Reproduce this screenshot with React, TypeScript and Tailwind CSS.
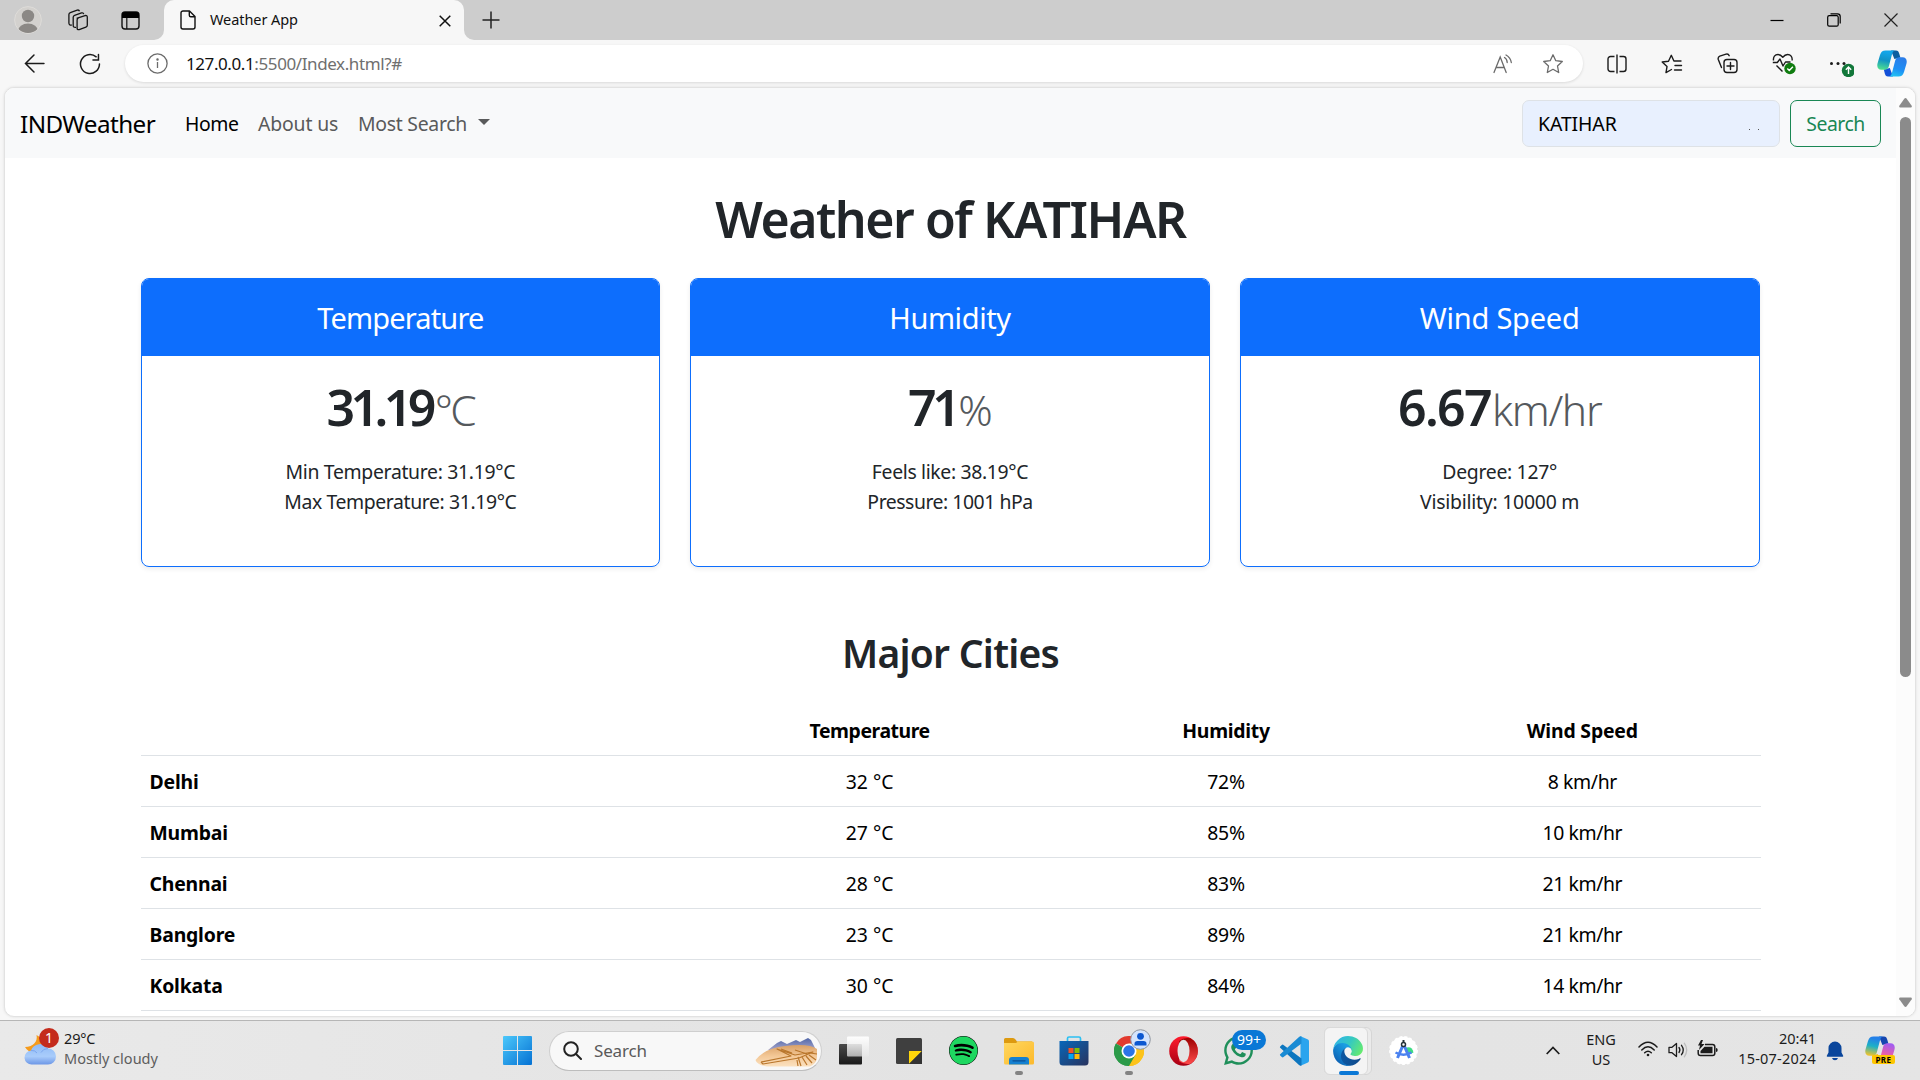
import type { ReactNode } from "react";
import { FaSpotify, FaWhatsapp } from "react-icons/fa";

type Metric = {
  title: string;
  titleTracking: string;
  value: string;
  valueTracking: string;
  unit: string;
  unitTracking: string;
  lines: { text: string; tracking: string }[];
};

const metrics: Metric[] = [
  {
    title: "Temperature",
    titleTracking: "tracking-[-0.029em]",
    value: "31.19",
    valueTracking: "tracking-[-0.092em]",
    unit: "°C",
    unitTracking: "tracking-[-0.06em] ml-[3px]",
    lines: [
      { text: "Min Temperature: 31.19°C", tracking: "tracking-[-0.0167em]" },
      { text: "Max Temperature: 31.19°C", tracking: "tracking-[-0.02em]" },
    ],
  },
  {
    title: "Humidity",
    titleTracking: "tracking-[-0.014em]",
    value: "71",
    valueTracking: "tracking-[-0.09em]",
    unit: "%",
    unitTracking: "tracking-[-0.02em] ml-0.5",
    lines: [
      { text: "Feels like: 38.19°C", tracking: "tracking-[-0.018em]" },
      { text: "Pressure: 1001 hPa", tracking: "tracking-[-0.024em]" },
    ],
  },
  {
    title: "Wind Speed",
    titleTracking: "tracking-[-0.008em]",
    value: "6.67",
    valueTracking: "tracking-[-0.033em]",
    unit: "km/hr",
    unitTracking: "tracking-[-0.03em] ml-px",
    lines: [
      { text: "Degree: 127°", tracking: "tracking-[-0.016em]" },
      { text: "Visibility: 10000 m", tracking: "tracking-[-0.012em]" },
    ],
  },
];

const cities = [
  { name: "Delhi", temp: "32 °C", humidity: "72%", wind: "8 km/hr" },
  { name: "Mumbai", temp: "27 °C", humidity: "85%", wind: "10 km/hr" },
  { name: "Chennai", temp: "28 °C", humidity: "83%", wind: "21 km/hr" },
  { name: "Banglore", temp: "23 °C", humidity: "89%", wind: "21 km/hr" },
  { name: "Kolkata", temp: "30 °C", humidity: "84%", wind: "14 km/hr" },
];

function TabStrip() {
  return (
    <div className="flex h-10 items-center bg-[#cdcdcd]">
      <div className="flex w-14 justify-center">
        <svg width="28" height="28" viewBox="0 0 28 28">
          <clipPath id="avatar">
            <circle cx="14" cy="14" r="13" />
          </clipPath>
          <circle cx="14" cy="14" r="13.4" fill="#d3d1ce" stroke="#dedcd9" />
          <g clipPath="url(#avatar)" fill="#8b8885">
            <circle cx="14" cy="10" r="6.2" />
            <ellipse cx="14" cy="25" rx="10" ry="7.5" />
          </g>
        </svg>
      </div>
      <div className="flex w-[43px] justify-center">
        <svg width="22" height="22" viewBox="0 0 22 22" fill="none" stroke="#151515" strokeWidth="1.3">
          <path d="M9.6 9.3 18 6.6q2.3-.5 2.3 1.6v8.1q0 1.3-1.4 1.8l-6.7 2.5q-2 .5-2.1-1.5v-8q0-1.4 1.2-1.9" />
          <path d="M9 18.3c-2 .4-2.8-.4-2.8-1.9V8.3q0-1.500 1.400-2l6.900-2.400q1.900-.5 2.200 1.300" />
          <path d="M4.800 16c-1.900.3-2.900-.5-2.900-2V5.600q0-1.500 1.400-2l6.900-2.500q1.800-.500 2.300 1.200" />
        </svg>
      </div>
      <div className="flex w-[65px] justify-center pr-[3px]">
        <svg width="19" height="19" viewBox="0 0 19 19">
          <rect x="1" y="1" width="17" height="17" rx="3" fill="none" stroke="#111" strokeWidth="1.400" />
          <path d="M1 7V3.500A2.500 2.500 0 0 1 3.500 1h12A2.500 2.500 0 0 1 18 3.500V7Z" fill="#000" />
          <path d="M5.800 7v11" stroke="#111" strokeWidth="1.200" />
        </svg>
      </div>
      <div className="relative flex h-10 w-[300px] items-center rounded-t-[10px] bg-[#f7f7f7] pr-[7px] pl-[15px]">
        <svg className="absolute bottom-0 -left-2.5" width="10" height="10">
          <path d="M10 0v10H0A10 10 0 0 0 10 0Z" fill="#f7f7f7" />
        </svg>
        <svg className="absolute -right-2.5 bottom-0" width="10" height="10">
          <path d="M0 0v10h10A10 10 0 0 1 0 0Z" fill="#f7f7f7" />
        </svg>
        <svg width="18" height="20" viewBox="0 0 18 20" fill="none" stroke="#111" strokeWidth="1.400" strokeLinejoin="round">
          <path d="M4 1h6.500L16 6.500V17a2 2 0 0 1-2 2H4a2 2 0 0 1-2-2V3a2 2 0 0 1 2-2Z" />
          <path d="M10.300 1v4.200a1.500 1.500 0 0 0 1.500 1.500H16" />
        </svg>
        <span className="ml-[13px] flex-1 text-[14.5px] tracking-[-0.005em] text-[#111]">Weather App</span>
        <svg className="mt-px mr-1.5" width="12" height="12" viewBox="0 0 12 12" stroke="#111" strokeWidth="1.500">
          <path d="m.7.7 10.600 10.600M11.300.7.7 11.300" />
        </svg>
      </div>
      <svg className="ml-[18px]" width="18" height="18" viewBox="0 0 18 18" stroke="#222" strokeWidth="1.500">
        <path d="M9 .5v17M.5 9h17" />
      </svg>
      <div className="ml-auto flex items-center">
        <div className="flex w-[57px] justify-center">
          <svg width="14" height="14" stroke="#000" strokeWidth="1.200">
            <path d="M.5 7.500h13" />
          </svg>
        </div>
        <div className="flex w-[57px] justify-center">
          <svg width="14" height="14" fill="none" stroke="#000" strokeWidth="1.200">
            <rect x=".7" y="2.700" width="10.500" height="10.500" rx="1.500" />
            <path d="M3.500.8h7a2.700 2.700 0 0 1 2.700 2.700v7" />
          </svg>
        </div>
        <div className="mr-px flex w-[57px] justify-center">
          <svg width="14" height="14" stroke="#222" strokeWidth="1.200">
            <path d="m.5.5 13 13M13.500.5l-13 13" />
          </svg>
        </div>
      </div>
    </div>
  );
}

function ToolSlot({ children }: { children: ReactNode }) {
  return <div className="flex w-[55px] justify-center">{children}</div>;
}

function CopilotMark({ id, colors }: { id: string; colors: string[] }) {
  return (
    <svg width="30" height="27" viewBox="0 0 30 27">
      <defs>
        <linearGradient id={id + "a"} x1="0.500" y1="0" x2="0.300" y2="1">
          <stop offset="0.100" stopColor={colors[0]} />
          <stop offset="0.500" stopColor={colors[1]} />
          <stop offset="1" stopColor={colors[2]} />
        </linearGradient>
        <linearGradient id={id + "b"} x1="0.600" y1="0" x2="0.300" y2="1">
          <stop offset="0" stopColor={colors[3]} />
          <stop offset="0.600" stopColor={colors[4]} />
          <stop offset="1" stopColor={colors[5]} />
        </linearGradient>
      </defs>
      <path d="M14 .5h5c2 0 2.600 1 3.200 3l1.200 4-6 1.500z" fill={colors[6]} />
      <path d="M16 26.500h-5c-2 0-2.600-1-3.200-3l-1-4 6-1.500z" fill={colors[7]} />
      <path d="M8.500.5H18c-2 .6-2.500 2-3.200 4.500l-3 11.500c-.8 2.500-2 3.200-4.300 3.200H4.500C1 19.700-.3 17 .5 13.500L3 5C4 1.800 5.500.5 8.500.5Z" fill={"url(#" + id + "a)"} />
      <path d="M21.500 26.500H12c2-.6 2.500-2 3.200-4.500l3-11.500c.8-2.500 2-3.200 4.300-3.200h3c3.500 0 4.800 2.700 4 6.200L27 22c-1 3.200-2.500 4.500-5.500 4.500Z" fill={"url(#" + id + "b)"} />
    </svg>
  );
}

function AddressBar() {
  return (
    <div className="flex h-[47px] items-center bg-[#f7f7f7]">
      <svg className="ml-6" width="21" height="19" viewBox="0 0 21 19" fill="none" stroke="#1b1b1b" strokeWidth="1.500" strokeLinecap="round">
        <path d="M20 9.500H1.500M10 1 1.500 9.500 10 18" />
      </svg>
      <svg className="ml-[34px]" width="22" height="22" viewBox="0 0 22 22" fill="none" stroke="#1b1b1b" strokeWidth="1.500" strokeLinecap="round">
        <path d="M20.500 11A9.500 9.500 0 1 1 17.200 3.800M19.500 1.500V7H14" />
      </svg>
      <div className="ml-6 flex h-[37px] w-[1461px] items-center rounded-full bg-white shadow-[0_1px_3px_rgba(0,0,0,0.12)]">
        <svg className="ml-[22px]" width="21" height="21" viewBox="0 0 21 21" fill="none" stroke="#6b6b6b" strokeWidth="1.300">
          <circle cx="10.500" cy="10.500" r="9.600" />
          <path d="M10.500 9v6" />
          <circle cx="10.500" cy="6.400" r=".6" fill="#6b6b6b" />
        </svg>
        <span className="ml-[18px] flex-1 text-[17px] tracking-[-0.0235em] text-[#6f6f6f]">
          <span className="text-[#111]">127.0.0.1</span>:5500/Index.html?#
        </span>
        <svg width="21" height="20" viewBox="0 0 21 20" fill="none" stroke="#6b6b6b" strokeWidth="1.300" strokeLinecap="round">
          <path d="M1 18.500 7.200 3 13.200 18.500M3.200 13.500h8" />
          <path d="M11.500 3.500q2.600 1.500 2.700 5M13 1q4.500 2.500 5.300 7.500" />
        </svg>
        <svg className="mr-[19px] ml-7" width="22" height="22" viewBox="0 0 22 22" fill="none" stroke="#6b6b6b" strokeWidth="1.300" strokeLinejoin="round">
          <path d="m11 1.800 2.800 5.900 6.500.8-4.800 4.500 1.200 6.500L11 16.300l-5.700 3.200 1.200-6.500L1.700 8.500l6.500-.8Z" />
        </svg>
      </div>
      <div className="ml-[7px] flex items-center">
        <ToolSlot>
          <svg width="20" height="20" viewBox="0 0 20 20" fill="none" stroke="#1b1b1b" strokeWidth="1.400">
            <path d="M7.500 2.500H3.500a2.500 2.500 0 0 0-2.500 2.500v10a2.500 2.500 0 0 0 2.500 2.500h4M12.500 2.500h4A2.500 2.500 0 0 1 19 5v10a2.500 2.500 0 0 1-2.500 2.500h-4M10 .5v19" />
          </svg>
        </ToolSlot>
        <ToolSlot>
          <svg width="22" height="20" viewBox="0 0 22 20" fill="none" stroke="#1b1b1b" strokeWidth="1.400" strokeLinejoin="round" strokeLinecap="round">
            <path d="M10.500 15.500 5 18.600l1-6L1.200 8l6.300-.8L10.300 1.300l2.600 5.700H20M14 11.500h6.500M13.500 16h7" />
          </svg>
        </ToolSlot>
        <ToolSlot>
          <svg width="21" height="21" viewBox="0 0 21 21" fill="none" stroke="#1b1b1b" strokeWidth="1.400" strokeLinecap="round">
            <path d="M4.500 14.500 1.300 6.500Q.600 4.200 2.800 3.200L9 1.200q2.300-.7 3.200 1.500" />
            <rect x="7" y="6.500" width="13" height="13" rx="3" />
            <path d="M13.500 9.500v7M10 13h7" />
          </svg>
        </ToolSlot>
        <ToolSlot>
          <svg className="ml-1" width="24" height="22" viewBox="0 0 24 22" fill="none" stroke="#1b1b1b" strokeWidth="1.400" strokeLinejoin="round">
            <path d="M1.500 7.500C1 4 3 1.500 6 1.500c2.500 0 3.800 1.500 4.800 2.800 1-1.300 2.300-2.800 4.800-2.800 3 0 5 2.500 4.500 6M4.500 12.500l6 6M.8 9.500h4.500L8 6l3 7 2.500-4h5" />
            <circle cx="18" cy="15.500" r="5.700" fill="#107c10" stroke="none" />
            <path d="m15.300 15.500 2 2 3.600-3.800" stroke="#fff" />
          </svg>
        </ToolSlot>
        <ToolSlot>
          <svg className="ml-[5px]" width="28" height="26" viewBox="0 0 28 26">
            <g fill="#1b1b1b">
              <circle cx="5.500" cy="12.500" r="1.500" />
              <circle cx="12" cy="12.500" r="1.500" />
              <circle cx="18" cy="12.500" r="1.500" />
            </g>
            <circle cx="22.500" cy="19.500" r="6.700" fill="#12773a" />
            <path d="M22.500 23v-6.500M19.800 18.800l2.700-2.700 2.700 2.700" fill="none" stroke="#fff" strokeWidth="1.400" />
          </svg>
        </ToolSlot>
        <ToolSlot>
          <CopilotMark id="edgeCopilot" colors={["#12a5e8", "#1193c6", "#4fe08e", "#2b7de8", "#1e90f5", "#22c3f2", "#0d5fa0", "#1450d8"]} />
        </ToolSlot>
      </div>
    </div>
  );
}

function Navbar() {
  return (
    <nav className="flex h-[70px] shrink-0 items-center bg-[#f8f9fa] px-[15px] text-[19.4px]">
      <div className="flex items-center pt-0.5">
        <span className="w-[165px] text-[24.25px] tracking-[-0.024em] text-black">INDWeather</span>
        <span className="w-[73px] tracking-[-0.02em] text-black">Home</span>
        <span className="w-[100px] tracking-[-0.008em] text-[#595a5b]">About us</span>
        <span className="w-[120px] tracking-[-0.014em] text-[#595a5b]">Most Search</span>
        <span className="-mt-1 h-0 w-0 border-x-[6px] border-t-[6px] border-x-transparent border-t-[#595a5b]" />
      </div>
      <div className="ml-auto flex h-[47px] w-[258px] items-center rounded-[7px] border border-[#dee2e6] bg-[#e8f0fe] pt-0.5 pr-4 pl-[15px] text-black">
        <span className="flex-1 tracking-[-0.004em]">KATIHAR</span>
        <span className="mt-[11px] mr-1 flex gap-2">
          <i className="h-px w-px bg-[#555]" />
          <i className="h-px w-px bg-[#555]" />
        </span>
      </div>
      <button className="ml-2.5 h-[47px] w-[91px] rounded-[7px] border border-[#198754] pt-0.5 tracking-[-0.025em] text-[#198754]">
        Search
      </button>
    </nav>
  );
}

function MetricCard({ metric }: { metric: Metric }) {
  return (
    <section className="h-[289px] overflow-hidden rounded-[8px] border border-[#0d6efd] text-center text-[#212529] shadow-[0_2px_5px_rgba(0,0,0,0.075)]">
      <h4 className={"h-[77px] bg-[#0d6efd] pt-[21px] text-[29px] leading-9 text-white " + metric.titleTracking}>{metric.title}</h4>
      <div className="pt-[21px]">
        <h1 className="h-[60px] text-[50px] leading-[60px] font-semibold whitespace-nowrap">
          <span className={metric.valueTracking}>{metric.value}</span>
          <small className={"text-[42.5px] leading-none font-light text-[#55595d] " + metric.unitTracking}>{metric.unit}</small>
        </h1>
        <ul className="mt-5 text-[19.4px] leading-[30px]">
          {metric.lines.map((line) => (
            <li key={line.text} className={line.tracking}>
              {line.text}
            </li>
          ))}
        </ul>
      </div>
    </section>
  );
}

function CityTable() {
  return (
    <table className="w-full table-fixed border-separate border-spacing-0 text-center text-[19.4px] leading-[30px] text-black">
      <colgroup>
        <col className="w-[551px]" />
        <col />
        <col />
        <col />
      </colgroup>
      <thead>
        <tr className="font-bold *:h-[51px] *:border-b *:border-[#dee2e6] *:px-0 *:pt-0.5 *:pb-0">
          <th />
          <th className="tracking-[-0.022em]">Temperature</th>
          <th className="tracking-[-0.015em]">Humidity</th>
          <th className="tracking-[-0.009em]">Wind Speed</th>
        </tr>
      </thead>
      <tbody>
        {cities.map((city) => (
          <tr key={city.name} className="*:h-[51px] *:border-b *:border-[#dee2e6] *:pt-0.5 *:pb-0">
            <th className="pl-[9px] text-left tracking-[-0.0098em]">{city.name}</th>
            <td>{city.temp}</td>
            <td className="tracking-[-0.01em]">{city.humidity}</td>
            <td className="tracking-[-0.02em]">{city.wind}</td>
          </tr>
        ))}
      </tbody>
    </table>
  );
}

function PageScrollbar() {
  return (
    <div className="flex w-[19px] flex-col items-center bg-[#fcfcfc] pt-2.5 pb-[9px]">
      <svg width="13" height="10" viewBox="0 0 13 10" fill="#8b8b8b">
        <path d="M6.500 0 Q7.200 0 7.700.7L12.700 7.800Q13.300 9.500 11.700 9.500H1.300Q-.3 9.500.3 7.800L5.300.7Q5.800 0 6.500 0Z" />
      </svg>
      <div className="mt-[9px] h-[560px] w-[11px] rounded-full bg-[#8b8b8b]" />
      <svg className="mt-auto" width="13" height="10" viewBox="0 0 13 10" fill="#8b8b8b">
        <path d="M6.500 10Q7.200 10 7.700 9.300L12.700 2.200Q13.300.5 11.700.5H1.300Q-.3.5.3 2.200L5.300 9.300Q5.800 10 6.500 10Z" />
      </svg>
    </div>
  );
}

function WeatherPage() {
  return (
    <div className="mx-1 flex h-[930px] overflow-hidden rounded-[10px] border border-[#e2e2e2] bg-white shadow-[0_0_3px_rgba(0,0,0,0.1)]">
      <div className="flex flex-1 flex-col">
        <Navbar />
        <main className="mx-auto w-[1620px]">
          <h1 className="mt-[31px] h-[60px] text-center text-[50px] leading-[60px] font-semibold tracking-[-0.029em] text-[#212529]">
            Weather of KATIHAR
          </h1>
          <div className="mt-[29px] mr-px grid grid-cols-3 gap-[30px]">
            {metrics.map((metric) => (
              <MetricCard key={metric.title} metric={metric} />
            ))}
          </div>
          <h2 className="mt-[62px] mb-7 text-center text-[39px] leading-[48px] font-semibold tracking-[-0.019em] text-[#212529]">
            Major Cities
          </h2>
          <CityTable />
        </main>
      </div>
      <PageScrollbar />
    </div>
  );
}

function AppSlot({ children, mark = "none" }: { children: ReactNode; mark?: "none" | "idle" | "active" }) {
  return (
    <div className="relative flex h-12 w-[55px] items-center justify-center">
      {children}
      {mark === "idle" && <span className="absolute bottom-0 h-1 w-2 rounded-full bg-[#838383]" />}
      {mark === "active" && <span className="absolute bottom-0 h-1 w-5 rounded-full bg-[#0a78d6]" />}
    </div>
  );
}

function WeatherWidget() {
  return (
    <div className="flex w-[503px] items-center pl-6">
      <div className="relative -mt-[7px] h-9 w-10">
        <svg className="absolute top-[6px] left-0" width="32" height="31" viewBox="0 0 32 31">
          <defs>
            <linearGradient id="cloud" x1="0" y1="0" x2="0" y2="1">
              <stop offset="0" stopColor="#8fbaf5" />
              <stop offset="0.600" stopColor="#a9ccfb" />
              <stop offset="1" stopColor="#6d97e6" />
            </linearGradient>
          </defs>
          <path d="M12.500 0C14 6 9.500 12 1 12c3.500 7 14 7 18 0V4Z" fill="#f59b1c" />
          <path d="M8 29.500a7 7 0 0 1-1-14 9.500 9.500 0 0 1 17-2 8 8 0 0 1 0 16Z" fill="url(#cloud)" />
          <path d="M7 15.500q4-.5 6 2.500M24 13.500q-5 0-7 4" fill="none" stroke="#7ba6ee" />
        </svg>
        <span className="absolute -top-px left-[15px] flex size-5 items-center justify-center rounded-full bg-[#c42b1c] text-sm text-white">1</span>
      </div>
      <div className="-mt-[5px] text-[14.5px] leading-5">
        <p className="tracking-[-0.01em] text-[#1a1a1a]">29°C</p>
        <p className="tracking-[0.001em] text-[#5d5d5d]">Mostly cloudy</p>
      </div>
    </div>
  );
}

function TaskbarSearch() {
  return (
    <div className="mr-[4px] ml-[17px] flex h-10 w-[273px] items-center rounded-full border border-[#cfcfcf] border-b-[#bdbdbd] bg-[#f8f8f8] pr-0.5 pl-[13px]">
      <svg width="19" height="19" viewBox="0 0 19 19" fill="none" stroke="#222" strokeWidth="2" strokeLinecap="round">
        <circle cx="8" cy="8" r="6.800" />
        <path d="m13 13 5 5" />
      </svg>
      <span className="ml-[12px] flex-1 text-[17px] tracking-[-0.01em] text-[#5a5a5a]">Search</span>
      <svg className="mt-1" width="64" height="29" viewBox="0 0 64 29">
        <defs>
          <linearGradient id="sand" x1="0" y1="0" x2="0" y2="1">
            <stop offset="0" stopColor="#d9a066" />
            <stop offset="0.500" stopColor="#f3c795" />
            <stop offset="1" stopColor="#fbe1c0" />
          </linearGradient>
          <linearGradient id="hills" x1="0" y1="0" x2="0" y2="1">
            <stop offset="0" stopColor="#5066a8" />
            <stop offset="1" stopColor="#b5b0cf" />
          </linearGradient>
        </defs>
        <path d="M13 12 22 5l4-2 6 3 9-4 4 2 8-4 3 2 4 8v4Z" fill="url(#hills)" />
        <path d="M.5 22Q10 10 30 8q24-3 32 3v9q-1 6-7 8.500H12Q2 27 .5 22Z" fill="url(#sand)" />
        <path d="M6 24 36 18 22 11l18 6 18-3-14 6-36 6-2-2M43 19l3 9M47 19l5 8M51 18l6 7M54 17l7 5M55 15l7 1M42 22l1 6M26 11l11 4M40 12l12 4" fill="none" stroke="#b9762c" strokeWidth="1.200" strokeLinejoin="round" />
      </svg>
    </div>
  );
}

function TaskbarApps() {
  return (
    <>
      <AppSlot>
        <svg width="30" height="29" viewBox="0 0 30 29">
          <defs>
            <linearGradient id="taskDark" x1="0" y1="0" x2="0" y2="1">
              <stop offset="0" stopColor="#4a4a4a" />
              <stop offset="1" stopColor="#1a1a1a" />
            </linearGradient>
            <linearGradient id="taskLight" x1="0" y1="0" x2="0" y2="1">
              <stop offset="0" stopColor="#fff" stopOpacity=".95" />
              <stop offset="1" stopColor="#e8e8e8" stopOpacity=".7" />
            </linearGradient>
          </defs>
          <rect y="8" width="23" height="20.500" rx="1" fill="url(#taskDark)" />
          <rect x="8" y=".5" width="22" height="20" rx="1" fill="url(#taskLight)" />
        </svg>
      </AppSlot>
      <AppSlot>
        <svg width="26" height="26" viewBox="0 0 26 26">
          <rect width="26" height="26" rx="1.500" fill="#3f3f3f" />
          <path d="M13 13h13L13 26Z" fill="#ffd60a" />
          <path d="M26 13v13H13Z" fill="#333" />
        </svg>
      </AppSlot>
      <AppSlot>
        <span className="rounded-full bg-black">
          <FaSpotify size={29} color="#1ed760" />
        </span>
      </AppSlot>
      <AppSlot mark="idle">
        <svg width="30" height="28" viewBox="0 0 30 28">
          <defs>
            <linearGradient id="folder" x1="0" y1="0" x2="1" y2="1">
              <stop offset="0" stopColor="#ffd75e" />
              <stop offset="1" stopColor="#fcb92c" />
            </linearGradient>
          </defs>
          <path d="M0 2.500Q0 1 1.500 1H9q1.500 0 2.500 1.500L13 4.500h15v4H0Z" fill="#dd9a10" />
          <path d="M0 6h12l2-1.500h14.500Q30 4.500 30 6v20q0 1.500-1.500 1.500h-27Q0 27.500 0 26Z" fill="url(#folder)" />
          <path d="M5 27.500V23q0-3 3-3h14q3 0 3 3v4.500Z" fill="#1480d0" />
          <path d="M9 23.800h12" stroke="#0b4f93" strokeWidth="1.300" strokeLinecap="round" />
        </svg>
      </AppSlot>
      <AppSlot>
        <svg width="30" height="30" viewBox="0 0 30 30">
          <defs>
            <linearGradient id="store" x1="0" y1="0" x2="1" y2="1">
              <stop offset="0" stopColor="#0767ba" />
              <stop offset="1" stopColor="#29335e" />
            </linearGradient>
          </defs>
          <path d="M8.500 6V2.500q0-1.500 1.500-1.500h10q1.500 0 1.500 1.500V6" fill="none" stroke="#2cc0f2" strokeWidth="1.700" />
          <path d="M.5 5h29v21q0 3.500-3.500 3.500H4Q.5 29.500.5 26Z" fill="url(#store)" />
          <path d="M9.500 12h5v5h-5Z" fill="#f35325" />
          <path d="M15.500 12h5v5h-5Z" fill="#81bc06" />
          <path d="M9.500 18h5v5h-5Z" fill="#05a6f0" />
          <path d="M15.500 18h5v5h-5Z" fill="#ffba08" />
        </svg>
      </AppSlot>
      <AppSlot mark="idle">
        <svg width="30" height="30" viewBox="0 0 48 48">
          <path d="M24 24 3.200 12A24 24 0 0 1 44.800 12Z" fill="#e23a2e" />
          <path d="M24 24 44.800 12A24 24 0 0 1 24 48Z" fill="#fbbc09" />
          <path d="M24 24V48A24 24 0 0 1 3.200 12Z" fill="#2b9a48" />
          <path d="M24 12h20.800A24 24 0 0 1 24 48l10.400-18Z" fill="#fcc31a" />
          <path d="M13.600 30 3.200 12A24 24 0 0 0 24 48l10.400-18Z" fill="#2b9a48" />
          <circle cx="24" cy="24" r="12" fill="#fff" />
          <circle cx="24" cy="24" r="9.300" fill="#2c74e8" />
        </svg>
        <svg className="absolute top-[2px] left-[29px]" width="21" height="21" viewBox="0 0 21 21">
          <circle cx="10.500" cy="10.500" r="9.800" fill="#d3e3fd" stroke="#8f959e" />
          <circle cx="10.500" cy="7.300" r="3.400" fill="#0b57d0" />
          <path d="M4.500 16.500v-1.800q0-2.700 3-2.700h6q3 0 3 2.700v1.800Z" fill="#0b57d0" />
        </svg>
      </AppSlot>
      <AppSlot>
        <svg width="29" height="30" viewBox="0 0 29 30">
          <defs>
            <linearGradient id="opera" x1="0" y1="0" x2="0" y2="1">
              <stop offset="0" stopColor="#ff1b2d" />
              <stop offset="1" stopColor="#a70014" />
            </linearGradient>
            <linearGradient id="operaSide" x1="0" y1="0" x2="0" y2="1">
              <stop offset="0" stopColor="#9c0000" />
              <stop offset="1" stopColor="#ff4b4b" />
            </linearGradient>
          </defs>
          <ellipse cx="14.500" cy="15" rx="14.300" ry="14.700" fill="url(#opera)" />
          <path d="M10 5Q15 .8 21.500 2.300 28.800 6.500 28.800 15T21.500 27.700Q15 29.200 10 25Z" fill="url(#operaSide)" />
          <ellipse cx="14.500" cy="15" rx="6" ry="11.300" fill="#e4e4e4" />
        </svg>
      </AppSlot>
      <AppSlot>
        <FaWhatsapp size={33} color="#1f8f5a" />
        <span className="absolute top-[3px] left-[21px] flex h-5 w-[34px] items-center justify-center rounded-full bg-[#0a78d6] text-sm text-white">
          99+
        </span>
      </AppSlot>
      <AppSlot>
        <svg width="30" height="30" viewBox="0 0 30 30">
          <path d="M21.500.3 29 3.500q1 .5 1 1.700v19.600q0 1.200-1 1.700l-7.500 3.200Z" fill="#2aa4ee" />
          <path d="m1.200 10.500 1.600-1.600q.8-.6 1.700 0L22.500 22.600v7Q21 30 20 29L1.200 11.800q-.7-.6 0-1.300Z" fill="#0d76bf" />
          <path d="m1.200 19.500 1.600 1.600q.8.600 1.700 0L22.500 7.400v-7Q21 0 20 1L1.200 18.200q-.7.600 0 1.300Z" fill="#1a8bd4" />
        </svg>
      </AppSlot>
      <div className="flex w-[55px] justify-center">
        <div className="-ml-0.5 w-12 rounded-[6px] border border-[#d6d6d6] bg-[#ebebeb]">
          <div className="relative -my-px -ml-px flex h-12 w-11 items-center justify-center rounded-[6px] border border-[#dadada] bg-[#f4f4f4]">
            <svg className="ml-1" width="30" height="30" viewBox="4 4 257 257">
              <defs>
                <linearGradient id="edgeDark" x1="0" y1="0.500" x2="1" y2="0.500">
                  <stop offset="0" stopColor="#0c59a4" />
                  <stop offset="1" stopColor="#114a8b" />
                </linearGradient>
                <linearGradient id="edgeMid" x1="0.800" y1="0.300" x2="0.300" y2="0.900">
                  <stop offset="0" stopColor="#1b9de2" />
                  <stop offset="0.500" stopColor="#1383cf" />
                  <stop offset="1" stopColor="#0d63b5" />
                </linearGradient>
                <linearGradient id="edgeTop" x1="0" y1="0.300" x2="1" y2="0.700">
                  <stop offset="0" stopColor="#2fb4e8" />
                  <stop offset="0.500" stopColor="#36c9c0" />
                  <stop offset="1" stopColor="#66eb6e" />
                </linearGradient>
              </defs>
              <path fill="url(#edgeDark)" d="M235.680 195.460a93.730 93.730 0 0 1-10.540 4.710 101.870 101.870 0 0 1-35.900 6.460c-47.320 0-88.540-32.550-88.540-74.320A31.480 31.480 0 0 1 117.130 105c-42.800 1.800-53.800 46.400-53.800 72.530 0 73.880 68.090 81.370 82.760 81.370 7.910 0 19.840-2.300 27-4.560l1.310-.44a128.340 128.340 0 0 0 66.600-52.800 4 4 0 0 0-5.320-5.640z" />
              <path fill="url(#edgeMid)" d="M110.340 246.340A79.200 79.200 0 0 1 87.600 225 80.720 80.720 0 0 1 117.130 105c3.120-1.470 8.450-4.130 15.540-4a32.350 32.350 0 0 1 25.690 13 31.880 31.880 0 0 1 6.360 18.660c0-.21 24.460-79.600-80-79.600-43.900 0-80 41.660-80 78.210a130.150 130.150 0 0 0 12.110 56 128 128 0 0 0 156.380 67.110 75.550 75.550 0 0 1-62.780-8.040z" />
              <path fill="url(#edgeTop)" d="M156.940 153.780c-.81 1.050-3.300 2.500-3.300 5.660 0 2.610 1.700 5.120 4.720 7.230 14.380 10 41.490 8.680 41.560 8.680a59.560 59.560 0 0 0 30.270-8.350 61.380 61.380 0 0 0 30.430-52.880c.26-22.410-8-37.310-11.340-43.910C228.090 28.760 182.350 4.680 132.610 4.680a128 128 0 0 0-128 126.200c.48-36.540 36.800-66.050 80-66.050 3.500 0 23.460.34 42 10.070 16.340 8.580 24.900 18.940 30.850 29.210 6.180 10.670 7.280 24.150 7.280 29.520s-2.740 13.330-7.800 20.150z" />
            </svg>
            <span className="absolute -bottom-px left-[14px] h-1 w-5 rounded-full bg-[#0a78d6]" />
          </div>
        </div>
      </div>
      <AppSlot>
        <svg width="29" height="29" viewBox="0 0 29 29">
          <circle cx="14.500" cy="14.500" r="13.700" fill="#fff" stroke="#fff" strokeDasharray="3 2" strokeWidth="1.500" />
          <path d="M16 12q7-3 8.500 4.500L19 19Z" fill="#3ddc84" />
          <path d="M14.500 8 8.500 22M14.500 8l6 14" stroke="#4a82f0" strokeWidth="3" />
          <path d="M6.500 16.500q8 4.500 16 0" fill="none" stroke="#4a82f0" strokeWidth="2.400" />
          <path d="M14.500 4v3" stroke="#263238" strokeWidth="2" />
          <circle cx="14.500" cy="8.500" r="2" fill="#fff" stroke="#263238" strokeWidth="1.500" />
        </svg>
      </AppSlot>
    </>
  );
}

function SystemTray() {
  return (
    <div className="ml-auto flex items-center text-[14.5px] text-[#1c1c1c]">
      <svg width="14" height="9" viewBox="0 0 14 9" fill="none" stroke="#1c1c1c" strokeWidth="1.700">
        <path d="M.7 8 7 1.500 13.300 8" />
      </svg>
      <div className="-mt-[3px] ml-[26px] w-[30px] text-center leading-5">
        <p>ENG</p>
        <p>US</p>
      </div>
      <svg className="-mt-1 ml-[22px]" width="20" height="16" viewBox="0 0 20 16" fill="none" stroke="#1c1c1c" strokeWidth="1.500" strokeLinecap="round">
        <path d="M1 6q9-9.500 18 0M3.800 9q6.200-6.400 12.400 0M6.700 11.800q3.300-3.200 6.600 0" />
        <circle cx="10" cy="14" r="1.300" fill="#1c1c1c" stroke="none" />
      </svg>
      <svg className="-mt-0.5 ml-2.5" width="20" height="18" viewBox="0 0 20 18" fill="none" stroke="#1c1c1c" strokeWidth="1.300" strokeLinecap="round" strokeLinejoin="round">
        <path d="M1 6.300h3L8.500 2.500v13L4 11.700H1ZM11 6.500q1.800 2.500 0 5M13.500 4.300q3.500 4.700 0 9.400" />
        <path d="M16.300 2.200q4.800 6.800 0 13.600" stroke="#bdbdbd" />
      </svg>
      <svg className="-mt-1 ml-[9px]" width="21" height="18" viewBox="0 0 21 18">
        <path d="M8 4.500h7.500a2.300 2.300 0 0 1 2.300 2.300v6.400a2.300 2.300 0 0 1-2.300 2.300h-12a2.300 2.300 0 0 1-2.300-2.300V10" fill="none" stroke="#1c1c1c" strokeWidth="1.500" />
        <path d="M19 8q1.700 0 1.700 2T19 12Z" fill="#1c1c1c" />
        <path d="M7.500 6.800h8v6.400h-12V11Z" fill="#1c1c1c" />
        <path d="M4 0 1 5.500h2L2 10l5.500-6h-3L6 0Z" fill="#1c1c1c" />
      </svg>
      <div className="-mt-[5px] ml-[18px] w-[80px] text-right leading-5">
        <p>20:41</p>
        <p className="tracking-[0.015em]">15-07-2024</p>
      </div>
      <svg className="ml-[10px]" width="18" height="20" viewBox="0 0 18 20" fill="#0a469c">
        <path d="M9 .5a6.500 6.500 0 0 1 6.500 6.500v4.500l1.700 3.200q.3 1-.7 1h-15q-1 0-.7-1l1.700-3.200V7A6.500 6.500 0 0 1 9 .5ZM6 17h6q-.7 2.200-3 2.200T6 17Z" />
      </svg>
      <div className="relative mr-[25px] ml-[21px] h-[29px] w-[30px]">
        <CopilotMark id="trayCopilot" colors={["#2380e8", "#1cb1c6", "#f2c32a", "#a25cf0", "#ee5fa2", "#ff9a4c", "#1546b0", "#f5b52c"]} />
        <span className="absolute top-[19px] left-[7px] flex h-[9px] w-[23px] items-center justify-center rounded-[2px] bg-[#fdc600] text-[8px] font-bold tracking-[0.06em] text-black">
          PRE
        </span>
      </div>
    </div>
  );
}

function Taskbar() {
  return (
    <footer className="flex h-[60px] items-center border-t border-[#b6b6b6] bg-linear-to-r from-[#e9e9e9] via-[#e3e3e3] to-[#e5e5e5]">
      <WeatherWidget />
      <svg width="29" height="29" viewBox="0 0 29 29">
        <defs>
          <linearGradient id="win" x1="0" y1="0" x2="1" y2="1">
            <stop offset="0" stopColor="#4cc8fb" />
            <stop offset="1" stopColor="#0571d3" />
          </linearGradient>
        </defs>
        <path d="M1 0h13v14H0V1q0-1 1-1ZM15 0h13q1 0 1 1v13H15ZM0 15h14v14H1q-1 0-1-1ZM15 15h14v13q0 1-1 1H15Z" fill="url(#win)" />
      </svg>
      <TaskbarSearch />
      <TaskbarApps />
      <SystemTray />
    </footer>
  );
}

export default function App() {
  return (
    <div className="flex h-[1080px] w-[1920px] flex-col overflow-hidden bg-[#f7f7f7] font-['Noto_Sans','Open_Sans',sans-serif]">
      <TabStrip />
      <AddressBar />
      <WeatherPage />
      <div className="flex-1" />
      <Taskbar />
    </div>
  );
}
